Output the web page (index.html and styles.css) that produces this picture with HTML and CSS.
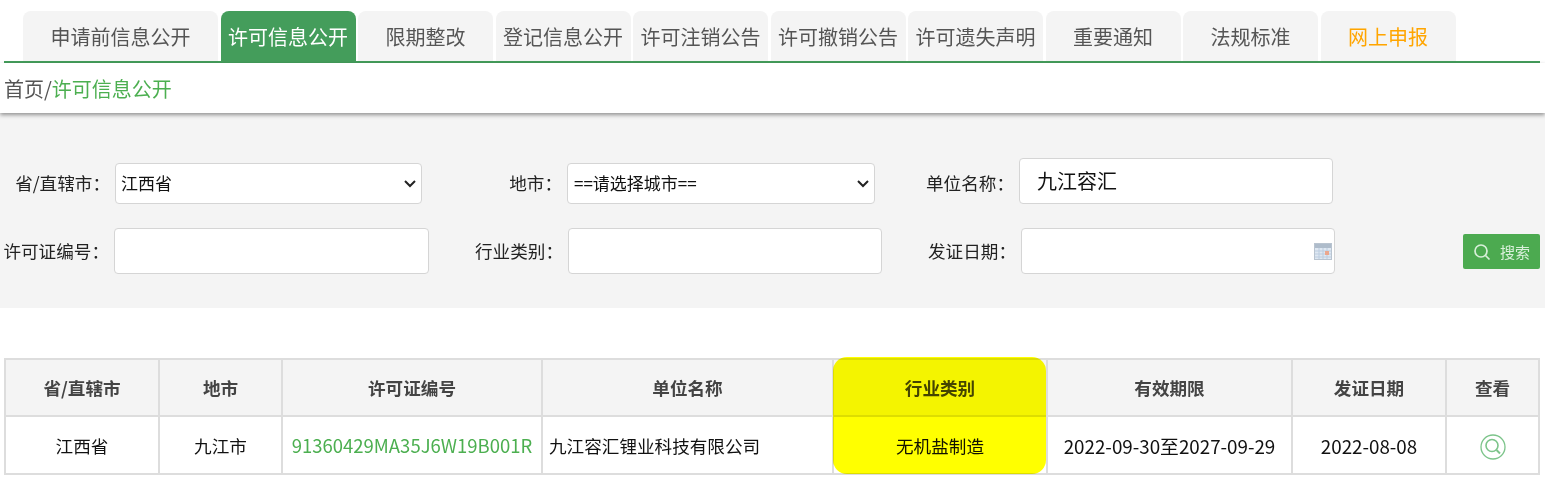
FILE: index.html
```html
<!DOCTYPE html>
<html lang="zh-CN">
<head>
    <meta charset="UTF-8">
    <title>许可信息公开</title>
    <link rel="stylesheet" href="styles.css">
</head>
<body>
    <ul class="tabs">
        <li class="tab tab-first">申请前信息公开</li>
        <li class="tab active">许可信息公开</li>
        <li class="tab">限期整改</li>
        <li class="tab">登记信息公开</li>
        <li class="tab">许可注销公告</li>
        <li class="tab">许可撤销公告</li>
        <li class="tab">许可遗失声明</li>
        <li class="tab">重要通知</li>
        <li class="tab">法规标准</li>
        <li class="tab tab-report">网上申报</li>
    </ul>
    <div class="crumb">首页/<a class="crumb-link">许可信息公开</a></div>

    <form class="filter">
        <div class="row row-top">
            <label class="label label-a">省/直辖市：</label>
            <select class="field pick select-a"><option>江西省</option></select>
            <label class="label label-b">地市：</label>
            <select class="field pick select-b"><option>==请选择城市==</option></select>
            <label class="label label-c">单位名称：</label>
            <input class="field input-c input-big" type="text" value="九江容汇">
        </div>
        <div class="row row-bottom">
            <label class="label label-d">许可证编号：</label>
            <input class="field input-d" type="text">
            <label class="label label-e">行业类别：</label>
            <input class="field input-e" type="text">
            <label class="label label-f">发证日期：</label>
            <div class="field date-box">
                <svg class="cal-icon" width="18" height="17" viewBox="0 0 18 17">
                    <rect x="0.5" y="0.5" width="17" height="16" fill="#dfe8f2" stroke="#b9c4d0"/>
                    <rect x="1" y="1" width="16" height="4" fill="#aebccb"/>
                    <path d="M1 8h16M1 11h16M1 14h16M5 5v11M9 5v11M13 5v11" stroke="#bccde0" fill="none"/>
                    <rect x="11" y="8" width="4" height="4" fill="#eba78e"/>
                </svg>
            </div>
            <button class="search-btn" type="button">
                <svg width="18" height="18" viewBox="0 0 18 18" fill="none" stroke="#d8efd9" stroke-width="1.7">
                    <circle cx="8" cy="8" r="6"/>
                    <path d="M12.5 12.5L16.5 16.5"/>
                </svg>
                <span>搜索</span>
            </button>
        </div>
    </form>

    <div class="result">
        <table class="list">
            <tr>
                <th class="c-prov">省/直辖市</th>
                <th class="c-city">地市</th>
                <th class="c-no">许可证编号</th>
                <th class="c-name">单位名称</th>
                <th class="c-type">行业类别</th>
                <th class="c-term">有效期限</th>
                <th class="c-date">发证日期</th>
                <th>查看</th>
            </tr>
            <tr>
                <td>江西省</td>
                <td>九江市</td>
                <td class="license">91360429MA35J6W19B001R</td>
                <td class="left">九江容汇锂业科技有限公司</td>
                <td>无机盐制造</td>
                <td class="day">2022-09-30至2027-09-29</td>
                <td class="day">2022-08-08</td>
                <td>
                    <svg class="view-icon" width="26" height="26" viewBox="0 0 26 26" fill="none" stroke="#7cc48a">
                        <circle cx="13" cy="13" r="12" stroke-width="1.3"/>
                        <circle cx="12" cy="11.5" r="6" stroke-width="1.6"/>
                        <path d="M16.5 16L20 19.5" stroke-width="2"/>
                    </svg>
                </td>
            </tr>
        </table>
        <div class="marker"></div>
    </div>
</body>
</html>
```

FILE: styles.css
```css
* {
    box-sizing: border-box;
}
body {
    margin: 0;
    font-family: "Noto Sans CJK SC", "Noto Sans", sans-serif;
    color: #333;
    background: #fff;
}
.tabs {
    display: flex;
    gap: 2.5px;
    list-style: none;
    margin: 11px 5px 0 4px;
    padding: 0 0 0 19px;
    border-bottom: 2px solid #449d5b;
    height: 52px;
}
.tab {
    width: 135px;
    height: 50px;
    line-height: 52px;
    text-align: center;
    font-size: 20px;
    color: #555;
    background: #f4f4f4;
    border-radius: 8px 8px 0 0;
}
.tab-first {
    width: 195px;
}
.tab.active {
    background: #449d5b;
    color: #fff;
}
.tab-report {
    color: #ffa500;
}
.crumb {
    position: relative;
    height: 50px;
    padding: 9px 0 0 4px;
    font-size: 20px;
    line-height: 34px;
    color: #555;
    background: #fff;
    box-shadow: 0 2px 4px rgba(0, 0, 0, 0.4);
}
.crumb-link {
    color: #4caf50;
}
.filter {
    height: 195px;
    padding-top: 45px;
    background: #f4f4f4;
}
.row {
    display: flex;
    align-items: flex-end;
}
.row-top {
    height: 46px;
}
.row-bottom {
    height: 46px;
    margin-top: 24px;
}
.label {
    flex: none;
    padding-right: 5px;
    font-size: 17.6px;
    line-height: 46px;
    text-align: right;
    color: #222;
}
.row-top .label {
    line-height: 43px;
}
.field {
    flex: none;
    background: #fff;
    border: 1px solid #d5d5d5;
    border-radius: 4px;
    color: #111;
    font-family: inherit;
    font-size: 17px;
}
.pick {
    appearance: none;
    padding: 0 0 3px 5px;
    background: #fff url("data:image/svg+xml,%3Csvg xmlns='http://www.w3.org/2000/svg' width='12' height='8'%3E%3Cpath d='M1 1l5 5 5-5' fill='none' stroke='%23222' stroke-width='2'/%3E%3C/svg%3E") no-repeat right 5px center;
}
.label-a { width: 115px; }
.select-a { width: 307px; height: 41px; }
.label-b { width: 145px; }
.select-b { width: 308px; height: 41px; padding-left: 6px; }
.label-c { width: 144px; }
.input-c { width: 314px; height: 46px; }
.input-big {
    padding: 0 17px 2px;
    font-size: 20px;
}
.label-d { width: 114px; }
.input-d { width: 315px; height: 46px; }
.label-e { width: 139px; }
.input-e { width: 314px; height: 46px; }
.label-f { width: 139px; }
.date-box {
    display: flex;
    align-items: center;
    justify-content: flex-end;
    width: 314px;
    height: 46px;
    padding-right: 2px;
}
.search-btn {
    display: flex;
    align-items: center;
    gap: 9px;
    width: 77px;
    height: 35px;
    margin: 0 0 5px 128px;
    padding: 0 0 0 10px;
    border: none;
    border-radius: 2px;
    background: #4caa50;
    color: #d8efd9;
    font-family: inherit;
    font-size: 15px;
}
.result {
    position: relative;
    margin: 50px 5px 0 4px;
}
.list {
    width: 100%;
    table-layout: fixed;
    border-collapse: collapse;
    font-size: 17.6px;
    border: 2px solid #ddd;
}
.list th,
.list td {
    border: 2px solid #ddd;
    text-align: center;
    padding: 0;
}
.list th {
    height: 57px;
    background: #f4f4f4;
    color: #444;
    font-weight: bold;
}
.list td {
    height: 58px;
    color: #111;
}
.c-prov { width: 154px; }
.c-city { width: 123px; }
.c-no { width: 260px; }
.c-name { width: 291px; }
.c-type { width: 214px; }
.c-term { width: 245px; }
.c-date { width: 154px; }
.list td.license {
    color: #4caf50;
    font-size: 18.5px;
}
.list td.day {
    font-size: 18.8px;
}
.list td.left {
    text-align: left;
    padding-left: 6px;
}
.view-icon {
    display: block;
    margin: 3px auto 0;
}
.marker {
    position: absolute;
    left: 829px;
    top: -1px;
    width: 213px;
    height: 117px;
    border-radius: 14px;
    background: #ffff00;
    mix-blend-mode: multiply;
}
```
